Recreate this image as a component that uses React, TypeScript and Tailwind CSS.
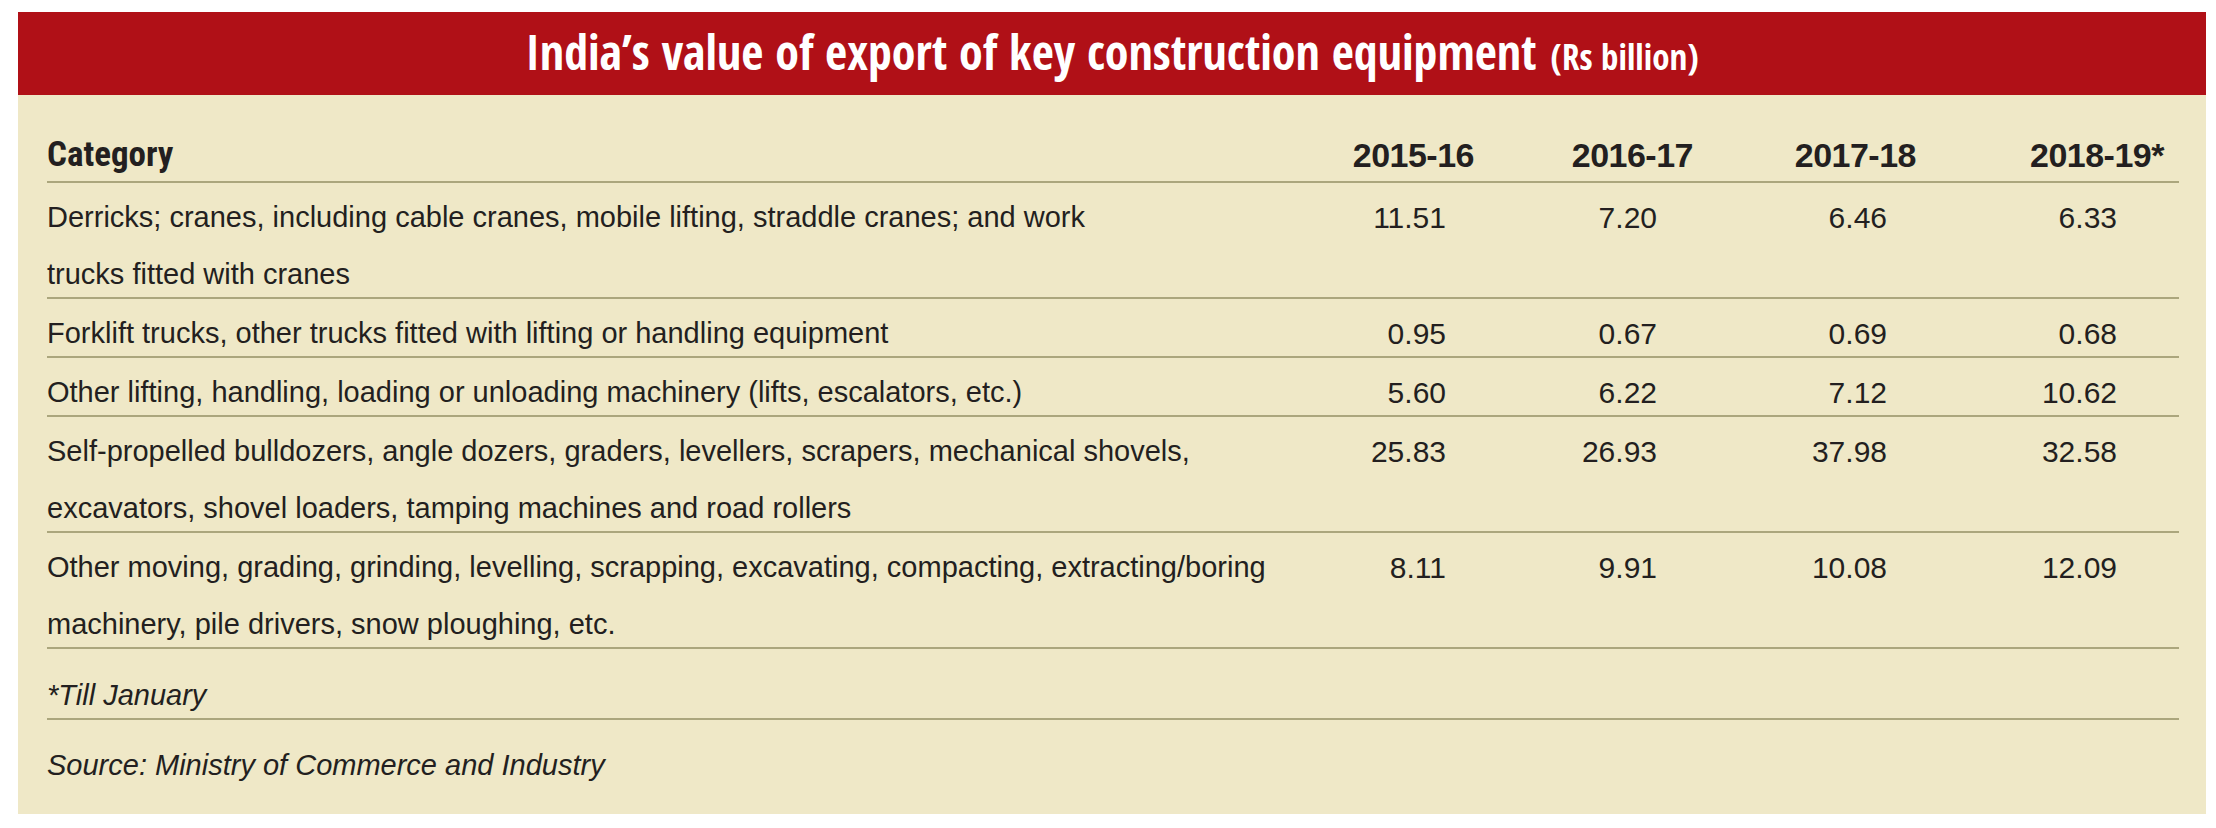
import React from "react";

type Row = { label: React.ReactNode; values: string[] };

const rows: Row[] = [
  {
    label: (
      <>
        Derricks; cranes, including cable cranes, mobile lifting, straddle cranes; and work
        <br />
        trucks fitted with cranes
      </>
    ),
    values: ["11.51", "7.20", "6.46", "6.33"],
  },
  {
    label: <>Forklift trucks, other trucks fitted with lifting or handling equipment</>,
    values: ["0.95", "0.67", "0.69", "0.68"],
  },
  {
    label: <>Other lifting, handling, loading or unloading machinery (lifts, escalators, etc.)</>,
    values: ["5.60", "6.22", "7.12", "10.62"],
  },
  {
    label: (
      <>
        Self-propelled bulldozers, angle dozers, graders, levellers, scrapers, mechanical shovels,
        <br />
        excavators, shovel loaders, tamping machines and road rollers
      </>
    ),
    values: ["25.83", "26.93", "37.98", "32.58"],
  },
  {
    label: (
      <>
        Other moving, grading, grinding, levelling, scrapping, excavating, compacting, extracting/boring
        <br />
        machinery, pile drivers, snow ploughing, etc.
      </>
    ),
    values: ["8.11", "9.91", "10.08", "12.09"],
  },
];

export default function App() {
  return (
    <div className="min-h-[828px] w-[2216px] bg-white pt-[12px] pl-[18px] font-['Liberation_Sans',Arial,sans-serif] text-[#231f20]">
      <div className="w-[2188px]">
        <div className="flex h-[83px] items-center justify-center bg-[#b01017] text-white">
          <h1 className="whitespace-nowrap font-['Open_Sans_Condensed','Roboto_Condensed',sans-serif] text-[48px] font-bold leading-[83px]">
            India’s value of export of key construction equipment{" "}
            <span className="ml-[2px] text-[35px]">(Rs billion)</span>
          </h1>
        </div>
        <div className="bg-[#efe8c7] pl-[29px] pr-[27px]">
          <div className="grid grid-cols-[1fr_230px_211px_230px_230px] border-b-2 border-[#aba67d] pt-[40px] pb-[6px] leading-[40px]">
            <div className="font-['Roboto_Condensed',sans-serif] text-[35px] font-bold">Category</div>
            <div className="pr-[34px] text-right text-[34px] font-bold tracking-[-0.5px]">2015-16</div>
            <div className="pr-[26px] text-right text-[34px] font-bold tracking-[-0.5px]">2016-17</div>
            <div className="pr-[33px] text-right text-[34px] font-bold tracking-[-0.5px]">2017-18</div>
            <div className="pr-[15px] text-right text-[34px] font-bold tracking-[-0.5px]">2018-19*</div>
          </div>
          {rows.map((r, i) => (
            <div
              key={i}
              className="grid grid-cols-[1fr_230px_211px_230px_230px] border-b-2 border-[#aba67d]"
            >
              <div className="mt-[6px] -mb-[6px] text-[29px] leading-[57px]">{r.label}</div>
              {r.values.map((v, j) => (
                <div key={j} className="mt-[6px] -mb-[6px] pr-[62px] text-right text-[30px] leading-[57px]">
                  {v}
                </div>
              ))}
            </div>
          ))}
          <div className="border-b-2 border-[#aba67d] pt-[26px] pb-[3px] text-[29px] italic leading-[40px]">
            *Till January
          </div>
          <div className="pt-[25px] pb-[29px] text-[29px] italic leading-[40px]">
            Source: Ministry of Commerce and Industry
          </div>
        </div>
      </div>
    </div>
  );
}
